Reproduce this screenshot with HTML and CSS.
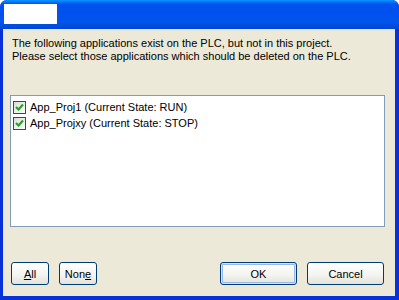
FILE: index.html
```html
<!DOCTYPE html>
<html lang="en">
<head>
    <meta charset="UTF-8">
    <title>Delete Applications</title>
    <link rel="stylesheet" href="styles.css">
</head>
<body>
    <div class="window">
        <div class="titlebar">
            <div class="caption"></div>
        </div>
        <div class="client">
            <p class="message">The following applications exist on the PLC, but not in this project.<br>Please select those applications which should be deleted on the PLC.</p>
            <div class="list">
                <label class="item"><span class="check"><svg width="9" height="9" viewBox="0 0 9 9"><path d="M1 4 L3.5 6.5 L8 1.5" fill="none" stroke="#21a121" stroke-width="2"/></svg></span>App_Proj1 (Current State: RUN)</label>
                <label class="item"><span class="check"><svg width="9" height="9" viewBox="0 0 9 9"><path d="M1 4 L3.5 6.5 L8 1.5" fill="none" stroke="#21a121" stroke-width="2"/></svg></span>App_Projxy (Current State: STOP)</label>
            </div>
            <div class="buttons">
                <button class="btn small"><u>A</u>ll</button>
                <button class="btn small">Non<u>e</u></button>
                <span class="spacer"></span>
                <button class="btn wide default">OK</button>
                <button class="btn wide">Cancel</button>
            </div>
        </div>
    </div>
</body>
</html>
```

FILE: styles.css
```css
body {
    margin: 0;
    font-family: "Liberation Sans", Arial, sans-serif;
    font-size: 11px;
    color: #000;
    background: #fff;
}

.window {
    width: 399px;
    height: 300px;
    display: flex;
    flex-direction: column;
    background: #0831d9;
    border-radius: 7px 7px 0 0;
    overflow: hidden;
}

.titlebar {
    height: 29px;
    box-sizing: border-box;
    padding: 4px 0 0 4px;
    background: linear-gradient(#0997ff 0px, #0053ee 4px, #0050ee 12px, #0055ea 22px, #0046d5 29px);
}

.caption {
    width: 53px;
    height: 20px;
    background: #fff;
}

.client {
    flex: 1;
    margin: 0 4px 4px 3px;
    background: #ece9d8;
    display: flex;
    flex-direction: column;
}

.message {
    margin: 8px 0 0 9px;
    line-height: 13px;
}

.list {
    margin: 32px 10px 0 7px;
    height: 132px;
    box-sizing: border-box;
    border: 1px solid #7f9db9;
    background: #fff;
    padding: 3px 0 0 2px;
}

.item {
    display: flex;
    align-items: center;
    height: 16px;
    gap: 4px;
}

.check {
    width: 11px;
    height: 11px;
    border: 1px solid #1c5180;
    background: linear-gradient(135deg, #dcdcd7, #fff);
    display: flex;
    align-items: center;
    justify-content: center;
}

.buttons {
    display: flex;
    gap: 10px;
    margin: 35px 11px 0 8px;
}

.spacer {
    flex: 1;
}

.btn {
    height: 23px;
    border: 1px solid #003c74;
    border-radius: 3px;
    background: linear-gradient(#fff, #f3f3ef 60%, #e3e2da);
    font-family: inherit;
    font-size: 11px;
    padding: 0;
    color: #000;
}

.btn.small {
    width: 38px;
}

.btn.wide {
    width: 77px;
}

.btn.default {
    box-shadow: inset 0 0 0 1px #cee7ff, inset 0 0 0 2px #98b8ea;
}
```
